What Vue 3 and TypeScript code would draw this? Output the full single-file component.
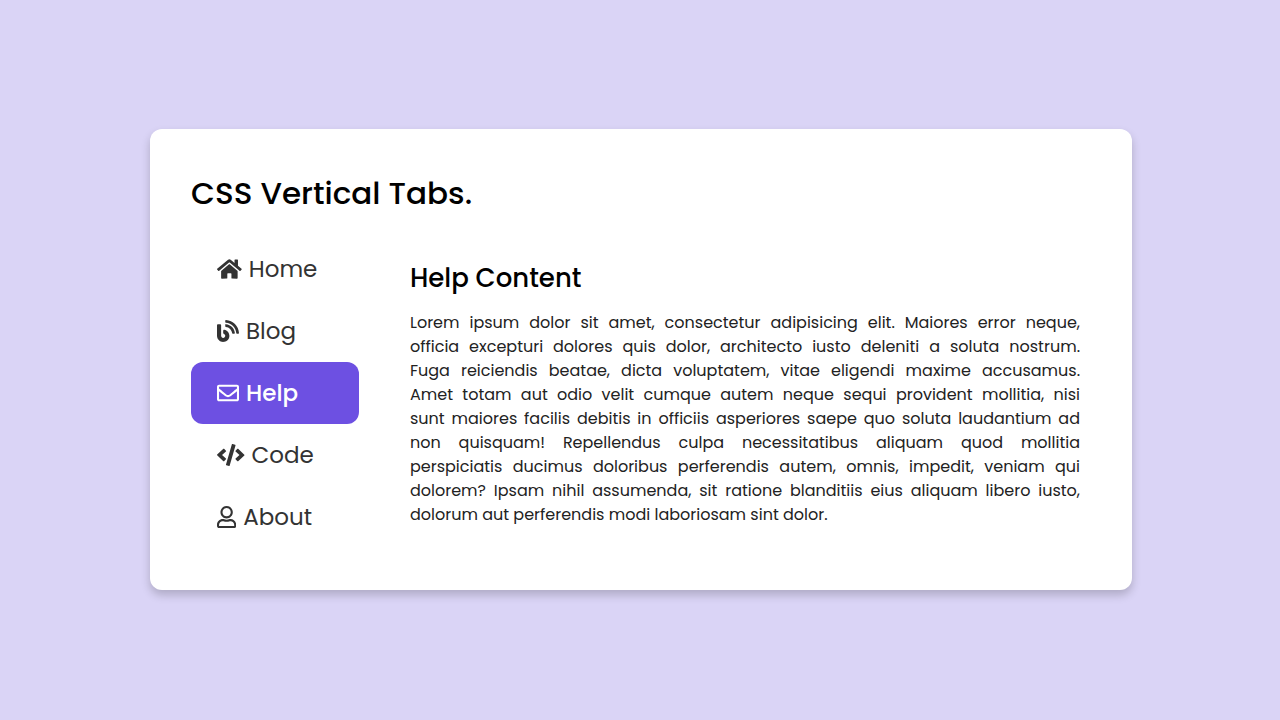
<script setup lang="ts">
import { computed, ref } from 'vue'

interface Tab {
  id: string
  label: string
  width: number
  path: string
}

const tabs: Tab[] = [
  {
    id: 'home',
    label: 'Home',
    width: 576,
    path: 'M280.37 148.26L96 300.11V464a16 16 0 0 0 16 16l112.06-.29a16 16 0 0 0 15.92-16V368a16 16 0 0 1 16-16h64a16 16 0 0 1 16 16v95.64a16 16 0 0 0 16 16.05L464 480a16 16 0 0 0 16-16V300L295.67 148.26a12.19 12.19 0 0 0-15.3 0zM571.6 251.47L488 182.56V44.05a12 12 0 0 0-12-12h-56a12 12 0 0 0-12 12v72.61L318.47 43a48 48 0 0 0-61 0L4.34 251.47a12 12 0 0 0-1.6 16.9l25.5 31A12 12 0 0 0 45.15 301l235.22-193.74a12.19 12.19 0 0 1 15.3 0L530.9 301a12 12 0 0 0 16.9-1.6l25.5-31a12 12 0 0 0-1.7-16.93z',
  },
  {
    id: 'blog',
    label: 'Blog',
    width: 512,
    path: 'M172.2 226.8c-14.6-2.9-28.2 8.9-28.2 23.8V301c0 10.2 7.1 18.4 16.7 22 18.2 6.8 31.3 24.4 31.3 45 0 26.5-21.5 48-48 48s-48-21.5-48-48V120c0-13.3-10.7-24-24-24H24c-13.3 0-24 10.7-24 24v248c0 89.5 82.1 160.2 175 140.7 54.4-11.4 98.3-55.4 109.7-109.7 17.4-82.9-37-157.2-112.5-172.2zM209 0c-9.2-.5-17 6.8-17 16v31.6c0 8.5 6.6 15.5 15 15.9 129.4 7 233.4 112 240.9 241.5.5 8.4 7.5 15 15.9 15h32.1c9.2 0 16.5-7.8 16-17C503.4 139.8 372.2 8.6 209 0zm.3 96c-9.3-.7-17.3 6.7-17.3 16.1v32.1c0 8.4 6.5 15.3 14.8 15.9 76.8 6.3 138 68.2 144.9 145.2.8 8.3 7.6 14.7 15.9 14.7h32.2c9.3 0 16.8-8 16.1-17.3-8.4-110.1-96.5-198.2-206.6-206.7z',
  },
  {
    id: 'help',
    label: 'Help',
    width: 512,
    path: 'M464 64H48C21.49 64 0 85.49 0 112v288c0 26.51 21.49 48 48 48h416c26.51 0 48-21.49 48-48V112c0-26.51-21.49-48-48-48zm0 48v40.805c-22.422 18.259-58.168 46.651-134.587 106.49-16.841 13.247-50.201 45.072-73.413 44.701-23.208.375-56.579-31.459-73.413-44.701C106.18 199.465 70.425 171.067 48 152.805V112h416zM48 400V214.398c22.914 18.251 55.409 43.862 104.938 82.646 21.857 17.205 60.134 55.186 103.062 54.955 42.717.231 80.509-37.199 103.053-54.947 49.528-38.783 82.032-64.401 104.947-82.653V400H48z',
  },
  {
    id: 'code',
    label: 'Code',
    width: 640,
    path: 'M278.9 511.5l-61-17.7c-6.4-1.8-10-8.5-8.2-14.9L346.2 8.7c1.8-6.4 8.5-10 14.9-8.2l61 17.7c6.4 1.8 10 8.5 8.2 14.9L293.8 503.3c-1.9 6.4-8.5 10.1-14.9 8.2zm-114-112.2l43.5-46.4c4.6-4.9 4.3-12.7-.8-17.2L117 256l90.6-79.7c5.1-4.5 5.5-12.3.8-17.2l-43.5-46.4c-4.5-4.8-12.1-5.1-17-.5L3.8 247.2c-5.1 4.7-5.1 12.8 0 17.5l144.1 135.1c4.9 4.6 12.5 4.4 17-.5zm327.2.6l144.1-135.1c5.1-4.7 5.1-12.8 0-17.5L492.1 112.1c-4.8-4.5-12.4-4.3-17 .5L431.6 159c-4.6 4.9-4.3 12.7.8 17.2L523 256l-90.6 79.7c-5.1 4.5-5.5 12.3-.8 17.2l43.5 46.4c4.5 4.9 12.1 5.1 17 .6z',
  },
  {
    id: 'about',
    label: 'About',
    width: 448,
    path: 'M313.6 304c-28.7 0-42.5 16-89.6 16-47.1 0-60.8-16-89.6-16C60.2 304 0 364.2 0 438.4V464c0 26.5 21.5 48 48 48h352c26.5 0 48-21.5 48-48v-25.6c0-74.2-60.2-134.4-134.4-134.4zM400 464H48v-25.6c0-47.6 38.8-86.4 86.4-86.4 14.6 0 38.3 16 89.6 16 51.7 0 74.9-16 89.6-16 47.6 0 86.4 38.8 86.4 86.4V464zM224 288c79.5 0 144-64.5 144-144S303.5 0 224 0 80 64.5 80 144s64.5 144 144 144zm0-240c52.9 0 96 43.1 96 96s-43.1 96-96 96-96-43.1-96-96 43.1-96 96-96z',
  },
]

const lines: string[] = [
  'Lorem ipsum dolor sit amet, consectetur adipisicing elit. Maiores error neque,',
  'officia excepturi dolores quis dolor, architecto iusto deleniti a soluta nostrum.',
  'Fuga reiciendis beatae, dicta voluptatem, vitae eligendi maxime accusamus.',
  'Amet totam aut odio velit cumque autem neque sequi provident mollitia, nisi',
  'sunt maiores facilis debitis in officiis asperiores saepe quo soluta laudantium ad',
  'non quisquam! Repellendus culpa necessitatibus aliquam quod mollitia',
  'perspiciatis ducimus doloribus perferendis autem, omnis, impedit, veniam qui',
  'dolorem? Ipsam nihil assumenda, sit ratione blanditiis eius aliquam libero iusto,',
  'dolorum aut perferendis modi laboriosam sint dolor.',
]

const activeId = ref('help')
const active = computed(() => tabs.find((t) => t.id === activeId.value) ?? tabs[0])
</script>

<template>
  <main class="page">
    <section class="card">
      <h1 class="title">CSS Vertical Tabs.</h1>
      <div class="body">
        <div class="tabs" role="tablist" aria-orientation="vertical">
          <button
            v-for="tab in tabs"
            :id="`tab-${tab.id}`"
            :key="tab.id"
            type="button"
            role="tab"
            class="tab"
            :class="{ active: tab.id === activeId }"
            :aria-selected="tab.id === activeId"
            aria-controls="panel"
            @click="activeId = tab.id"
          >
            <svg class="icon" :viewBox="`0 0 ${tab.width} 512`" aria-hidden="true">
              <path :d="tab.path" />
            </svg>
            <span>{{ tab.label }}</span>
          </button>
        </div>
        <article id="panel" class="panel" role="tabpanel" :aria-labelledby="`tab-${active.id}`">
          <h2 class="heading">{{ active.label }} Content</h2>
          <p class="text">
            <span v-for="line in lines" :key="line" class="line">{{ line }}</span>
          </p>
        </article>
      </div>
    </section>
  </main>
</template>

<style>
body {
  margin: 0;
}
</style>

<style scoped>
.page {
  box-sizing: border-box;
  min-height: 100vh;
  padding: 24px 24px 25px 26px;
  display: flex;
  align-items: center;
  justify-content: center;
  background: #dad4f6;
  font-family: Poppins, Inter, "Open Sans", sans-serif;
  color: #000;
}

.card {
  box-sizing: border-box;
  width: 100%;
  max-width: 982px;
  padding: 41px 41px 42px;
  background: #fff;
  border-radius: 12px;
  box-shadow: 0 5px 10px rgba(0, 0, 0, 0.2);
}

.title {
  margin: 0 0 22px;
  font-size: 31px;
  line-height: 46px;
  font-weight: 500;
}

.body {
  display: grid;
  grid-template-columns: 168px minmax(0, 1fr);
  column-gap: 51px;
}

.tabs {
  display: flex;
  flex-direction: column;
}

.tab {
  display: flex;
  align-items: center;
  gap: 7px;
  height: 62px;
  padding: 0 26px;
  border: 0;
  border-radius: 12px;
  background: transparent;
  color: #333;
  font-family: inherit;
  font-size: 23px;
  font-weight: 400;
  cursor: pointer;
}

.tab.active {
  background: #6d50e2;
  color: #fff;
  font-weight: 500;
}

.icon {
  flex: none;
  height: 22px;
  fill: currentColor;
}

.panel {
  padding: 20px 11px 0 0;
}

.heading {
  margin: 0 0 13px;
  font-size: 26px;
  line-height: 40px;
  font-weight: 500;
}

.text {
  margin: 0;
  font-size: 16px;
  line-height: 24px;
  font-weight: 400;
  color: #222;
}

.line {
  display: block;
  text-align: justify;
  text-align-last: justify;
}

.line:last-child {
  text-align-last: left;
}
</style>
